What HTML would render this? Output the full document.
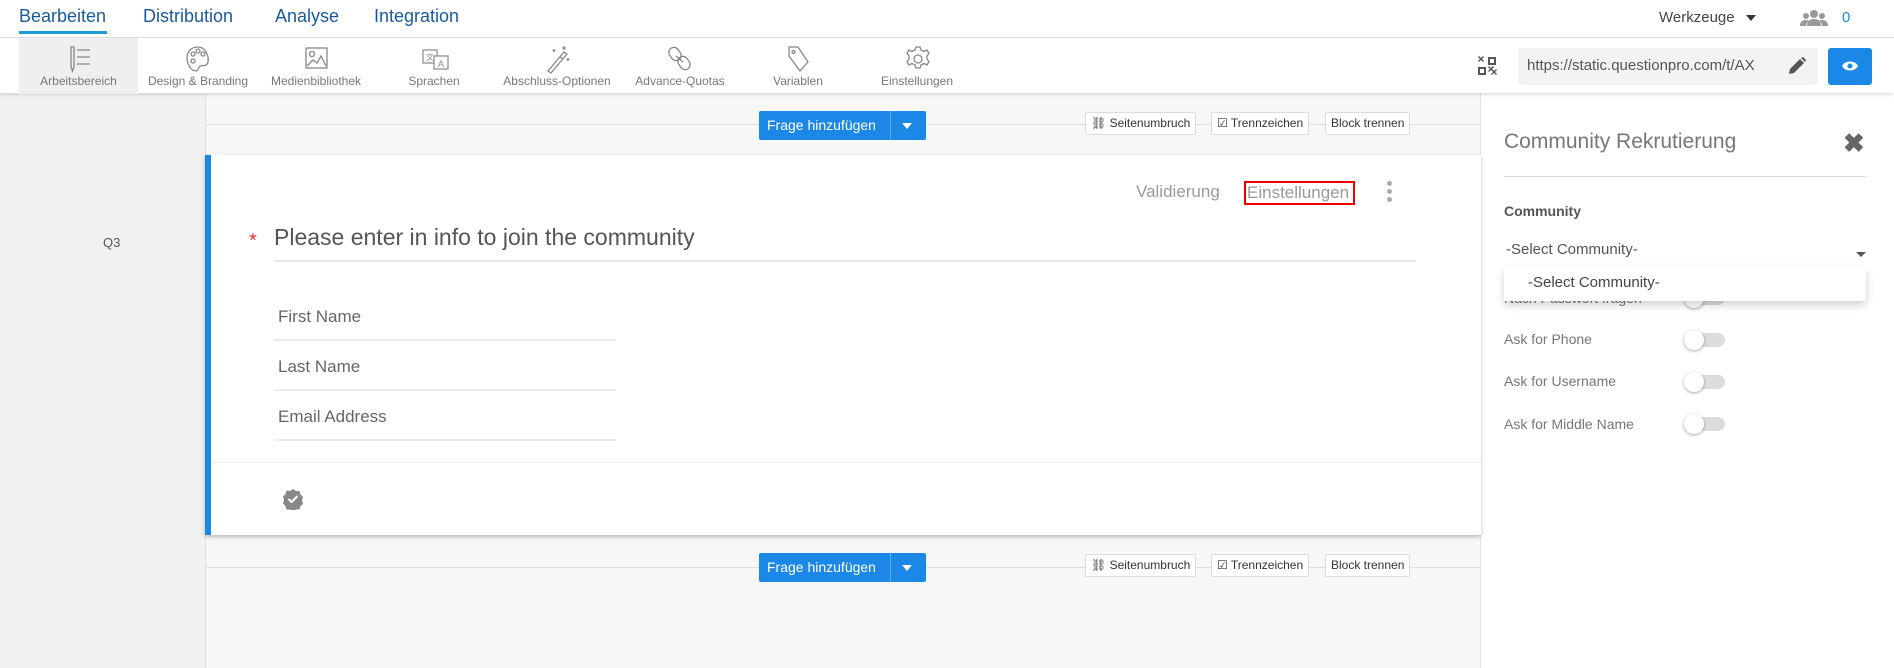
<!DOCTYPE html>
<html><head><meta charset="utf-8"><style>
*{box-sizing:border-box;margin:0;padding:0}
body{width:1894px;height:668px;overflow:hidden;font-family:"Liberation Sans",sans-serif;background:#fff;position:relative;color:#444}
.a{position:absolute;white-space:nowrap}
.nav{font-size:18px;color:#1a5a9c;top:6px}
.tb{top:37px;left:0;width:1894px;height:56px;background:#fff;border-top:1px solid #ddd;box-shadow:0 2px 3px rgba(0,0,0,.12);z-index:2}
.ti{position:absolute;top:0;height:56px;text-align:center;font-size:12px;color:#777}
.ti svg{position:absolute;top:6px;left:50%;margin-left:-13px}
.ti span{position:absolute;bottom:6px;left:0;right:0}
.btn{background:#1b87e6;color:#fff;font-size:14px;border-radius:2px;height:29px;line-height:29px}
.sb{height:23px;line-height:21px;border:1px solid #ddd;border-radius:2px;background:#fff;font-size:12px;color:#333;padding:0 5px}
.fl{font-size:17px;color:#666;left:278px}
.ln{height:2px;background:#ebebeb;left:274px;width:342px}
.tl{font-size:14px;color:#777;left:1504px}
.tg{left:1685px;width:40px;height:14px;border-radius:7px;background:#ddd}
.tg::before{content:"";position:absolute;left:-1px;top:-3px;width:20px;height:20px;border-radius:50%;background:#fff;box-shadow:0 1px 3px rgba(0,0,0,.35)}
</style></head><body>
<div class="a nav" style="left:19px;color:#1a5a9c">Bearbeiten</div>
<div class="a" style="left:19px;top:31px;width:88px;height:3px;background:#1b9ad6"></div>
<div class="a nav" style="left:143px">Distribution</div>
<div class="a nav" style="left:275px">Analyse</div>
<div class="a nav" style="left:374px">Integration</div>
<div class="a" style="left:1659px;top:9px;font-size:15px;color:#444">Werkzeuge</div>
<div class="a" style="left:1746px;top:15px;border-left:5px solid transparent;border-right:5px solid transparent;border-top:6px solid #333"></div>
<svg class="a" style="left:1800px;top:9px" width="28" height="18" viewBox="0 0 28 18"><circle cx="14" cy="5" r="4" fill="#999"/><circle cx="6" cy="7" r="3" fill="#999"/><circle cx="22" cy="7" r="3" fill="#999"/><path d="M7 17c0-5 3-7 7-7s7 2 7 7z" fill="#999"/><path d="M0 17c0-4 2-6 6-6 1 0 2 0 3 1-2 1-3 3-3 5zM28 17c0-4-2-6-6-6-1 0-2 0-3 1 2 1 3 3 3 5z" fill="#999"/></svg>
<div class="a" style="left:1842px;top:9px;font-size:15px;color:#1b87e6">0</div>
<div class="a tb">
<div class="ti" style="left:19px;width:119px;background:#efefef"><svg width="26" height="30" viewBox="0 0 26 30" fill="none" stroke="#888" stroke-width="1.3"><path d="M5 3v20l1.5 4 1.5-4V3z"/><path d="M11 6h13M11 13h13M11 20h13"/></svg><span>Arbeitsbereich</span></div>
<div class="ti" style="left:139px;width:118px"><svg width="26" height="30" viewBox="0 0 26 30" fill="none" stroke="#888" stroke-width="1.3"><path d="M13 3C6 3 2 8 2 14s4 13 9 13c3 0 2-4 4-5s7 1 8-4-2-15-10-15z"/><circle cx="8" cy="10" r="2"/><circle cx="13" cy="7" r="2"/><circle cx="18" cy="10" r="2"/><circle cx="8" cy="17" r="2"/></svg><span>Design &amp; Branding</span></div>
<div class="ti" style="left:257px;width:118px"><svg width="26" height="30" viewBox="0 0 26 30" fill="none" stroke="#888" stroke-width="1.3"><rect x="3" y="4" width="21" height="20"/><circle cx="9" cy="10" r="2.5"/><path d="M4 22l6-6 4 3 4-7 5 10"/></svg><span>Medienbibliothek</span></div>
<div class="ti" style="left:375px;width:118px"><svg width="30" height="30" viewBox="0 0 30 30" fill="none" stroke="#888" stroke-width="1.2"><rect x="2" y="6" width="14" height="13"/><rect x="13" y="12" width="14" height="13" fill="#fff"/><text x="5" y="16" font-size="8" fill="#888" stroke="none">文</text><text x="17" y="23" font-size="9" fill="#888" stroke="none">A</text></svg><span>Sprachen</span></div>
<div class="ti" style="left:493px;width:128px"><svg width="26" height="30" viewBox="0 0 26 30" fill="none" stroke="#888" stroke-width="1.3"><path d="M4 27L20 8l3 2L7 29z"/><path d="M16 13l3 2M20 2v4M18 4h4M10 5v3M8.5 6.5h3M24 14v3M22.5 15.5h3"/></svg><span>Abschluss-Optionen</span></div>
<div class="ti" style="left:621px;width:118px"><svg width="26" height="30" viewBox="0 0 26 30" fill="none" stroke="#888" stroke-width="1.3"><rect x="3" y="3" width="10" height="14" rx="5" transform="rotate(-35 8 10)"/><rect x="12" y="12" width="10" height="14" rx="5" transform="rotate(-35 17 19)"/><path d="M9 12l7 6"/></svg><span>Advance-Quotas</span></div>
<div class="ti" style="left:739px;width:118px"><svg width="26" height="30" viewBox="0 0 26 30" fill="none" stroke="#888" stroke-width="1.3"><path d="M4 3h9l10 15-8 9L4 12z"/><circle cx="8.5" cy="8" r="1.5"/></svg><span>Variablen</span></div>
<div class="ti" style="left:857px;width:120px"><svg width="28" height="30" viewBox="0 0 28 30" fill="none" stroke="#888" stroke-width="1.3"><path d="M12 3h4l1 3 3 1.5 3-1.5 2 3.5-2 2.5v3l2 2.5-2 3.5-3-1.5-3 1.5-1 3h-4l-1-3-3-1.5-3 1.5-2-3.5 2-2.5v-3l-2-2.5 2-3.5 3 1.5 3-1.5z"/><circle cx="14" cy="15" r="4"/></svg><span>Einstellungen</span></div>
<svg class="a" style="left:1477px;top:18px" width="20" height="20" viewBox="0 0 20 20" fill="#555"><path d="M1 1l2 2-2 2 1 1 2-2 2 2 1-1-2-2 2-2-1-1-2 2-2-2zM11 1h8v8h-8zM13 3v4h4V3zM1 11h8v8H1zM3 13v4h4v-4zM11 11l2 2-2 2 1 1 2-2 2 2-2 2 1 1 2-2 2 2 1-1-2-2 2-2-1-1-2 2-2-2 2-2-1-1-2 2-2-2z"/></svg>
<div class="a" style="left:1518px;top:10px;width:300px;height:37px;background:#f3f3f3;border-radius:3px"></div>
<div class="a" style="left:1527px;top:19px;font-size:15px;color:#555">https://static.questionpro.com/t/AX</div>
<svg class="a" style="left:1787px;top:18px" width="20" height="20" viewBox="0 0 20 20"><path d="M2 18l1-5 10-10 4 4-10 10zM14 2l2-1 3 3-1 2z" fill="#555"/></svg>
<div class="a" style="left:1828px;top:10px;width:44px;height:37px;background:#1b87e6;border-radius:3px"></div>
<svg class="a" style="left:1841px;top:21px" width="18" height="14" viewBox="0 0 18 14"><path d="M1 7c3-6 13-6 16 0-3 6-13 6-16 0z" fill="#fff"/><circle cx="9" cy="7" r="2.5" fill="#1b87e6"/></svg>
</div>
<div class="a" style="left:0;top:93px;width:205px;height:575px;background:#f1f1f1"></div>
<div class="a" style="left:103px;top:235px;font-size:13px;color:#555">Q3</div>
<div class="a" style="left:205px;top:93px;width:1276px;height:575px;background:#f7f7f7;border-left:1px solid #e2e2e2;border-right:1px solid #e2e2e2"></div>
<div class="a" style="left:206px;top:124px;width:1274px;height:1px;background:#ddd"></div>
<div class="a" style="left:206px;top:567px;width:1274px;height:1px;background:#ddd"></div>
<div class="a btn" style="left:759px;top:111px;width:167px"><span style="position:absolute;left:8px">Frage hinzufügen</span><span style="position:absolute;left:131px;top:0;width:1px;height:29px;background:#5aaef0"></span><span style="position:absolute;left:143px;top:12px;border-left:5px solid transparent;border-right:5px solid transparent;border-top:6px solid #fff"></span></div>
<div class="a btn" style="left:759px;top:553px;width:167px"><span style="position:absolute;left:8px">Frage hinzufügen</span><span style="position:absolute;left:131px;top:0;width:1px;height:29px;background:#5aaef0"></span><span style="position:absolute;left:143px;top:12px;border-left:5px solid transparent;border-right:5px solid transparent;border-top:6px solid #fff"></span></div>
<div class="a sb" style="left:1085px;top:112px">⛓ Seitenumbruch</div>
<div class="a sb" style="left:1211px;top:112px">☑ Trennzeichen</div>
<div class="a sb" style="left:1325px;top:112px">Block trennen</div>
<div class="a sb" style="left:1085px;top:554px">⛓ Seitenumbruch</div>
<div class="a sb" style="left:1211px;top:554px">☑ Trennzeichen</div>
<div class="a sb" style="left:1325px;top:554px">Block trennen</div>
<div class="a" style="left:205px;top:155px;width:1276px;height:380px;background:#fff;box-shadow:0 2px 4px rgba(0,0,0,.25);border-left:6px solid #1b87e6"></div>
<div class="a" style="left:1136px;top:182px;font-size:17px;color:#999">Validierung</div>
<div class="a" style="left:1244px;top:181px;width:111px;height:24px;border:2px solid #e00"></div>
<div class="a" style="left:1247px;top:183px;font-size:17px;color:#999">Einstellungen</div>
<div class="a" style="left:1387px;top:181px;width:5px;height:5px;border-radius:50%;background:#aaa;box-shadow:0 8px 0 #aaa,0 16px 0 #aaa"></div>
<div class="a" style="left:249px;top:230px;font-size:20px;color:#e33">*</div>
<div class="a" style="left:274px;top:224px;font-size:23px;color:#555">Please enter in info to join the community</div>
<div class="a" style="left:274px;top:260px;width:1142px;height:2px;background:#e8e8e8"></div>
<div class="a fl" style="top:307px">First Name</div><div class="a ln" style="top:339px"></div>
<div class="a fl" style="top:357px">Last Name</div><div class="a ln" style="top:389px"></div>
<div class="a fl" style="top:407px">Email Address</div><div class="a ln" style="top:439px"></div>
<div class="a" style="left:211px;top:462px;width:1270px;height:1px;background:#eee"></div>
<svg class="a" style="left:282px;top:488px" width="22" height="22" viewBox="0 0 22 22"><path d="M11 1l3 2 3.5 0 1 3.5 2.5 2.5-1 3.5 1 3.5-2.5 2-1 3.5-3.5 0-3 2-3-2-3.5 0-1-3.5L1 15.5l1-3.5-1-3.5L3.5 6l1-3.5L8 3z" fill="#888"/><path d="M6.5 11l3 3 6-6" stroke="#fff" stroke-width="2" fill="none"/></svg>
<div class="a" style="left:1504px;top:130px;font-size:21px;color:#777">Community Rekrutierung</div>
<div class="a" style="left:1843px;top:130px;font-size:26px;font-weight:bold;color:#666;line-height:26px">✖</div>
<div class="a" style="left:1504px;top:176px;width:362px;height:1px;background:#ddd"></div>
<div class="a" style="left:1504px;top:203px;font-size:14px;font-weight:bold;color:#555">Community</div>
<div class="a" style="left:1506px;top:241px;font-size:15px;color:#555">-Select Community-</div>
<div class="a" style="left:1856px;top:252px;border-left:5px solid transparent;border-right:5px solid transparent;border-top:5px solid #555"></div>
<div class="a tl" style="top:290px">Nach Passwort fragen</div>
<div class="a tg" style="top:291px"></div>
<div class="a" style="left:1504px;top:267px;width:362px;height:34px;background:#fff;box-shadow:0 4px 8px rgba(0,0,0,.18)"></div>
<div class="a" style="left:1528px;top:274px;font-size:15px;color:#444">-Select Community-</div>
<div class="a tl" style="top:331px">Ask for Phone</div><div class="a tg" style="top:333px"></div>
<div class="a tl" style="top:373px">Ask for Username</div><div class="a tg" style="top:375px"></div>
<div class="a tl" style="top:416px">Ask for Middle Name</div><div class="a tg" style="top:417px"></div>
</body></html>
